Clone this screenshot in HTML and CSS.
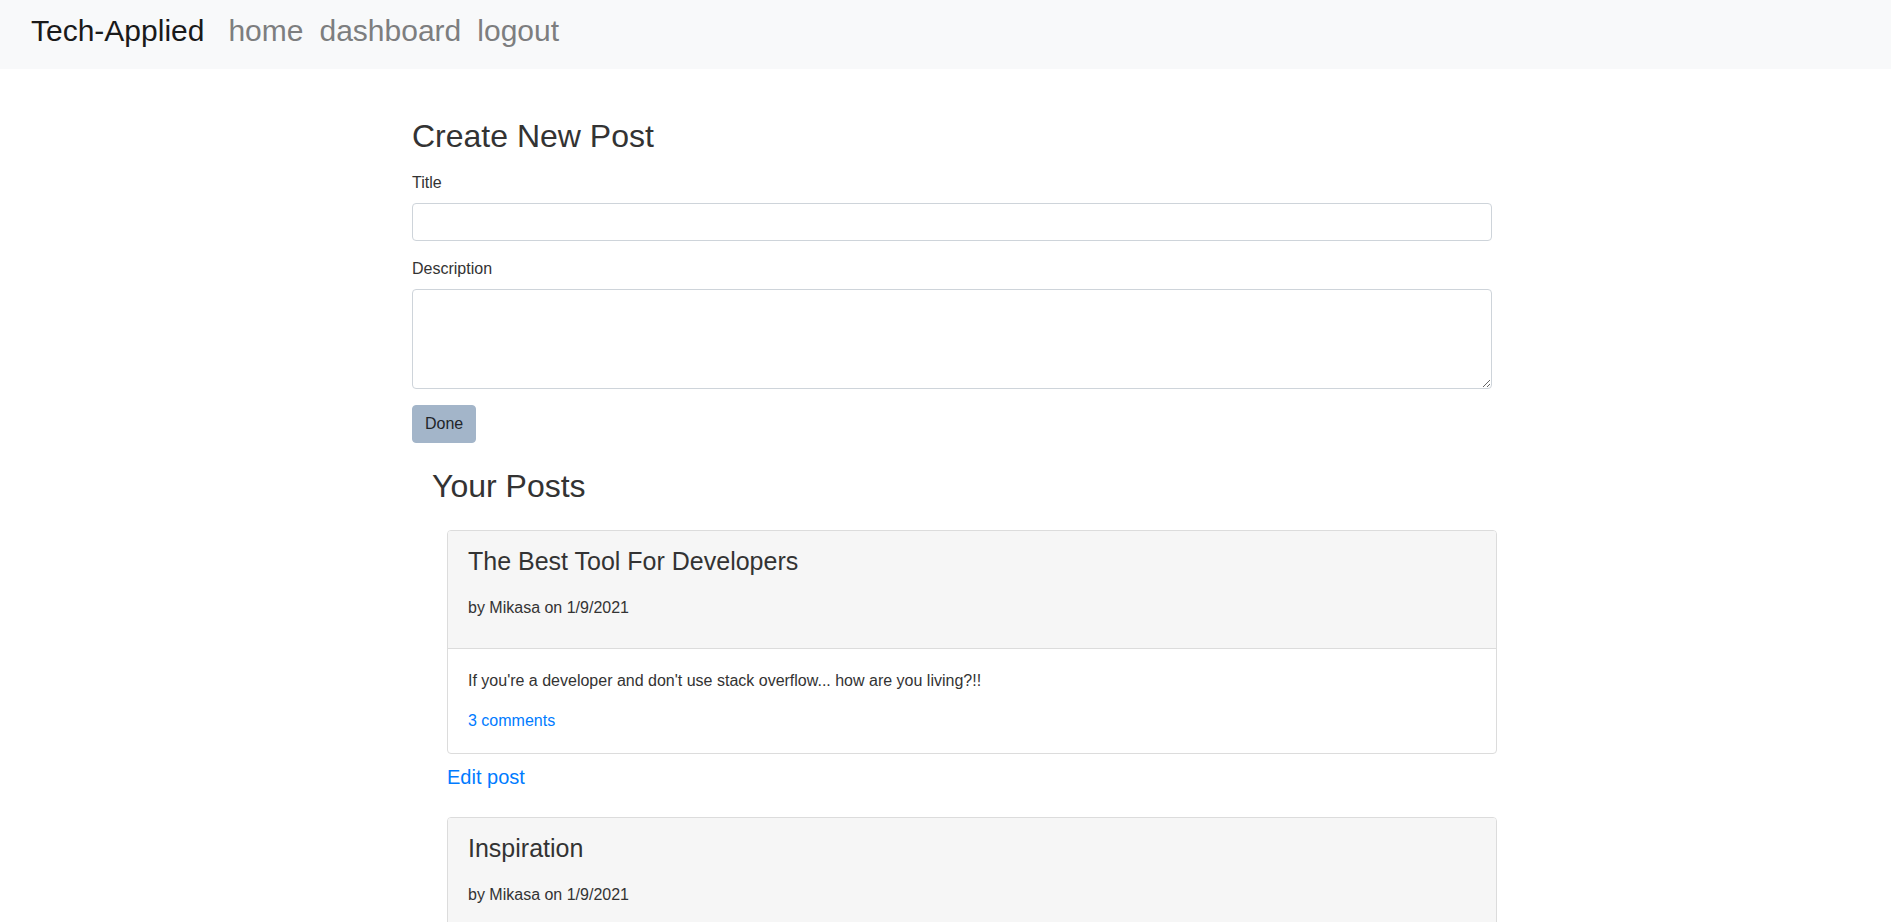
FILE: index.html
```html
<!DOCTYPE html>
<html lang="en">
<head>
<meta charset="utf-8">
<title>Tech-Applied</title>
<link rel="stylesheet" href="styles.css">
</head>
<body>
<nav class="navbar">
  <a class="brand" href="#">Tech-Applied</a>
  <a class="nav-link" href="#">home</a>
  <a class="nav-link" href="#">dashboard</a>
  <a class="nav-link" href="#">logout</a>
</nav>
<main class="container">
  <section class="new-post">
    <h2 class="page-title">Create New Post</h2>
    <form class="post-form">
      <div class="form-group">
        <label class="form-label" for="title">Title</label>
        <input class="form-control" id="title" type="text">
      </div>
      <div class="form-group">
        <label class="form-label" for="desc">Description</label>
        <textarea class="form-control textarea" id="desc"></textarea>
      </div>
      <button class="btn" type="button">Done</button>
    </form>
  </section>
  <section class="posts">
    <h2 class="posts-title">Your Posts</h2>
    <div class="post">
      <div class="card">
        <div class="card-header">
          <div class="card-title">The Best Tool For Developers</div>
          <p class="card-meta">by Mikasa on 1/9/2021</p>
        </div>
        <div class="card-body">
          <p class="card-text">If you're a developer and don't use stack overflow... how are you living?!!</p>
          <a class="comments" href="#">3 comments</a>
        </div>
      </div>
      <a class="edit-link" href="#">Edit post</a>
    </div>
    <div class="post">
      <div class="card">
        <div class="card-header">
          <div class="card-title">Inspiration</div>
          <p class="card-meta">by Mikasa on 1/9/2021</p>
        </div>
        <div class="card-body">
          <p class="card-text">Keep pushing, one line of code at a time.</p>
          <a class="comments" href="#">2 comments</a>
        </div>
      </div>
      <a class="edit-link" href="#">Edit post</a>
    </div>
  </section>
</main>
</body>
</html>
```

FILE: styles.css
```css
* { box-sizing: border-box; }
html, body { margin: 0; padding: 0; }
body {
  font-family: "Liberation Sans", Arial, sans-serif;
  font-size: 16px;
  line-height: 1.5;
  color: #333;
  background: #fff;
}
a { text-decoration: none; }

.navbar {
  display: flex;
  align-items: flex-start;
  height: 69px;
  padding: 8px 31px 0;
  background: #f8f9fa;
}
.brand {
  font-size: 30px;
  line-height: 45px;
  color: #1a1a1a;
  margin-right: 16px;
}
.nav-link {
  font-size: 30px;
  line-height: 45px;
  color: #7d7e7f;
  padding: 0 8px;
}

.container {
  width: 1085px;
  margin-left: 412px;
  padding-top: 48px;
}
.page-title {
  font-size: 32px;
  font-weight: 400;
  line-height: 1.2;
  margin: 0 0 16px;
}
.form-group { margin-bottom: 16px; }
.form-label {
  display: block;
  margin-bottom: 8px;
}
.form-control {
  display: block;
  width: 1080px;
  height: 38px;
  padding: 6px 12px;
  font: inherit;
  border: 1px solid #ced4da;
  border-radius: 4px;
  background: #fff;
}
.textarea {
  height: 100px;
  resize: vertical;
}
.btn {
  display: inline-block;
  font: inherit;
  color: #212529;
  background: #a3b5c9;
  border: 1px solid #a3b5c9;
  border-radius: 4px;
  padding: 6px 12px;
  height: 38px;
}

.posts-title {
  font-size: 32px;
  font-weight: 400;
  line-height: 1.2;
  margin: 24px 0 24px 20px;
}
.post {
  margin-left: 35px;
  width: 1050px;
  margin-bottom: 25px;
}
.card {
  border: 1px solid #dcdcdc;
  border-radius: 4px;
  overflow: hidden;
}
.card-header {
  background: #f6f6f6;
  border-bottom: 1px solid #dcdcdc;
  padding: 12px 20px;
}
.card-title {
  font-size: 25px;
  line-height: 36px;
  margin-bottom: 17px;
}
.card-meta { margin: 0 0 16px; }
.card-body { padding: 20px; }
.card-text { margin: 0 0 16px; }
.comments { color: #007bff; }
.edit-link {
  display: inline-block;
  margin-top: 8px;
  font-size: 20px;
  line-height: 30px;
  color: #007bff;
}
```
